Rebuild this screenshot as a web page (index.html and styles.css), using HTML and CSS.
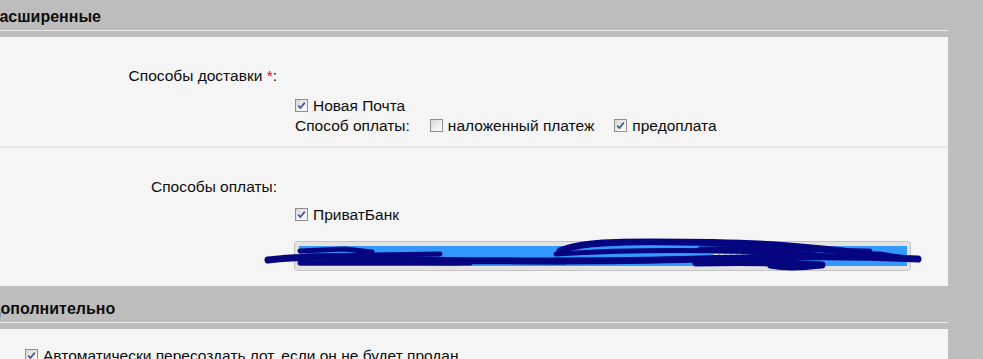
FILE: index.html
```html
<!DOCTYPE html>
<html>
<head>
<meta charset="utf-8">
<title>Параметры лота</title>
<link rel="stylesheet" href="styles.css">
</head>
<body>
<div class="page">

<div class="sec-head"><span class="sec-title">Расширенные</span></div>
<div class="panel">
  <div class="row">
    <div class="row-label">Способы доставки <span class="req">*</span>:</div>
    <div class="row-field">
      <div class="opt"><span class="cb"><svg viewBox="0 0 11 11"><path d="M2.2 5.6 L4.4 8 L8.8 2.6"/></svg></span>Новая Почта</div>
      <div class="opt"><span class="opt-name">Способ оплаты:</span><span class="cb"></span><span class="opt-name">наложенный платеж</span><span class="cb"><svg viewBox="0 0 11 11"><path d="M2.2 5.6 L4.4 8 L8.8 2.6"/></svg></span>предоплата</div>
    </div>
  </div>
  <div class="row row-sep">
    <div class="row-label">Способы оплаты:</div>
    <div class="row-field row-field-near">
      <div class="opt"><span class="cb"><svg viewBox="0 0 11 11"><path d="M2.2 5.6 L4.4 8 L8.8 2.6"/></svg></span>ПриватБанк</div>
      <div class="list-wrap">
        <div class="list"><div class="list-item">Е &middot;&middot;&middot;&middot; &middot;&middot;&middot;&middot;&middot;&middot;&middot;&middot;&middot;&middot; &nbsp; &nbsp; &nbsp; &nbsp; &nbsp; &nbsp; &nbsp; &nbsp; &nbsp; &nbsp; &nbsp; &nbsp; &nbsp; &nbsp; &nbsp; &nbsp; &nbsp; &nbsp; &nbsp; &nbsp; &nbsp; &nbsp; &nbsp; &nbsp; &nbsp; &nbsp; &nbsp; &nbsp; &nbsp; &nbsp; &nbsp; &nbsp; &nbsp; &nbsp; &nbsp; &nbsp; &nbsp; &nbsp; &nbsp; &nbsp; &nbsp; &nbsp; &nbsp; &nbsp; &nbsp; &nbsp; &nbsp; &nbsp; &nbsp; &nbsp; &nbsp; &nbsp; &nbsp; &nbsp; &nbsp; &nbsp; пппппп</div></div>
        <svg class="scribble" viewBox="260 233 670 45">
          <path class="s-wide" d="M268 260 C300 256 330 257 380 259 S600 262 700 259 S850 256 918 259"/>
          <path d="M300 251 L345 249 L372 252"/>
          <path d="M305 256 L440 254"/>
          <path d="M300 263 L470 263"/>
          <path d="M384 262 L458 263"/>
          <path d="M490 261 L565 262"/>
          <path class="s-wide" d="M560 251 C575 244 600 242 650 242 S760 243 800 247 S840 250 848 252"/>
          <path d="M556 254 C620 250 700 250 760 252 S820 256 830 256"/>
          <path d="M700 249 C760 247 820 250 870 251"/>
          <path class="s-wide" d="M696 263 C740 262 790 263 822 265"/>
          <path d="M770 266 Q790 270 820 266"/>
          <path d="M840 254 L880 254 L905 258"/>
        </svg>
      </div>
    </div>
  </div>
</div>

<div class="sec-head"><span class="sec-title">Дополнительно</span></div>
<div class="panel">
  <div class="row row-plain">
    <div class="opt"><span class="cb"><svg viewBox="0 0 11 11"><path d="M2.2 5.6 L4.4 8 L8.8 2.6"/></svg></span>Автоматически пересоздать лот, если он не будет продан</div>
  </div>
</div>

</div>
</body>
</html>
```

FILE: styles.css
```css
/* Lot form: advanced options */

body
{ margin: 0;
background-color: #bdbdbd;
font-family: "Liberation Sans", Arial, sans-serif;
font-size: 15.5px;
color: #0d0d0d;
overflow: hidden;
}

div.page
{ width: 948px;
margin-top: -6px;
}

/* Section headers */

div.sec-head
{ height: 37px;
box-sizing: border-box;
border-bottom: 1px solid #ececec;
margin-bottom: 6px;
}

span.sec-title
{ display: block;
padding-top: 13px;
line-height: 20px;
font-size: 16px;
font-weight: bold;
text-indent: -11px;
}

div.panel
{ background-color: #f5f5f5;
}

/* Rows */

div.row
{ padding: 29px 0 10px 0;
}

div.row-sep
{ border-top: 2px solid #e6e6e6;
padding-bottom: 15px;
}

div.row-plain
{ padding: 17px 0 10px 25px;
}

div.row-label
{ width: 277px;
text-align: right;
line-height: 20px;
}

span.req
{ color: #f00;
}

div.row-field
{ margin-left: 295px;
margin-top: 10px;
}

div.row-field-near
{ margin-top: 8px;
}

div.opt
{ display: flex;
align-items: center;
line-height: 20px;
}

span.opt-name
{ margin-right: 20px;
}

/* Checkboxes */

span.cb
{ display: inline-block;
width: 13px;
height: 13px;
box-sizing: border-box;
border: 1px solid #8e8f8f;
background: linear-gradient(135deg, #d6d6d6, #f4f4f4 70%, #fff);
margin-right: 5px;
position: relative;
top: -1px;
}

span.cb svg
{ display: block;
width: 11px;
height: 11px;
}

span.cb path
{ fill: none;
stroke: #44558e;
stroke-width: 1.7;
}

/* Account list */

div.list-wrap
{ position: relative;
margin-top: 16px;
margin-left: -1px;
width: 617px;
}

div.list
{ border: 1px solid #c4c4c4;
border-radius: 3px;
background-color: #e2e2e2;
padding: 4px 3px 4px 4px;
}

div.list-item
{ height: 20px;
background-color: #3399ff;
color: #fff;
font-size: 11px;
line-height: 20px;
padding-left: 4px;
white-space: nowrap;
overflow: hidden;
}

svg.scribble
{ position: absolute;
left: -34px;
top: -8px;
width: 670px;
height: 45px;
}

svg.scribble path
{ fill: none;
stroke: #05057f;
stroke-width: 5;
stroke-linecap: round;
stroke-linejoin: round;
}

svg.scribble path.s-wide
{ stroke-width: 7;
}
```
